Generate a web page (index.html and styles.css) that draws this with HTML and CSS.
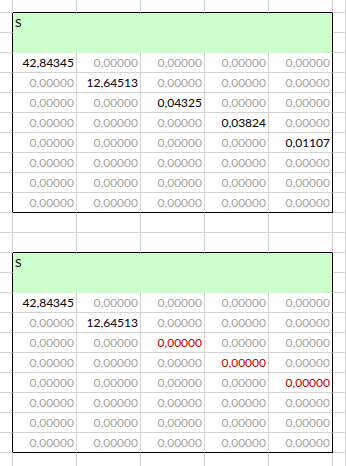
FILE: index.html
```html
<!DOCTYPE html>
<html>
<head>
<meta charset="utf-8">
<link rel="stylesheet" href="styles.css">
</head>
<body>
<div class="sheet">
  <!-- row 0 -->
  <div class="c top"></div><div class="c top tb"></div><div class="c top tb"></div><div class="c top tb"></div><div class="c top tb"></div><div class="c top tb"></div><div class="c top"></div>
  <!-- table 1 header -->
  <div class="c lb"></div><div class="hd">S</div><div class="c"></div>
  <div class="c lb"></div><div class="c"></div>
  <!-- table 1 data -->
  <div class="c lb"></div><div class="c k">42,84345</div><div class="c g">0,00000</div><div class="c g">0,00000</div><div class="c g">0,00000</div><div class="c g rb">0,00000</div><div class="c"></div>
  <div class="c lb"></div><div class="c g">0,00000</div><div class="c k">12,64513</div><div class="c g">0,00000</div><div class="c g">0,00000</div><div class="c g rb">0,00000</div><div class="c"></div>
  <div class="c lb"></div><div class="c g">0,00000</div><div class="c g">0,00000</div><div class="c k">0,04325</div><div class="c g">0,00000</div><div class="c g rb">0,00000</div><div class="c"></div>
  <div class="c lb"></div><div class="c g">0,00000</div><div class="c g">0,00000</div><div class="c g">0,00000</div><div class="c k">0,03824</div><div class="c g rb">0,00000</div><div class="c"></div>
  <div class="c lb"></div><div class="c g">0,00000</div><div class="c g">0,00000</div><div class="c g">0,00000</div><div class="c g">0,00000</div><div class="c k rb">0,01107</div><div class="c"></div>
  <div class="c lb"></div><div class="c g">0,00000</div><div class="c g">0,00000</div><div class="c g">0,00000</div><div class="c g">0,00000</div><div class="c g rb">0,00000</div><div class="c"></div>
  <div class="c lb"></div><div class="c g">0,00000</div><div class="c g">0,00000</div><div class="c g">0,00000</div><div class="c g">0,00000</div><div class="c g rb">0,00000</div><div class="c"></div>
  <div class="c lb"></div><div class="c g tb">0,00000</div><div class="c g tb">0,00000</div><div class="c g tb">0,00000</div><div class="c g tb">0,00000</div><div class="c g rb tb">0,00000</div><div class="c"></div>
  <!-- gap rows -->
  <div class="c"></div><div class="c"></div><div class="c"></div><div class="c"></div><div class="c"></div><div class="c"></div><div class="c"></div>
  <div class="c"></div><div class="c tb"></div><div class="c tb"></div><div class="c tb"></div><div class="c tb"></div><div class="c tb"></div><div class="c"></div>
  <!-- table 2 header -->
  <div class="c lb"></div><div class="hd">S</div><div class="c"></div>
  <div class="c lb"></div><div class="c"></div>
  <!-- table 2 data -->
  <div class="c lb"></div><div class="c k">42,84345</div><div class="c g">0,00000</div><div class="c g">0,00000</div><div class="c g">0,00000</div><div class="c g rb">0,00000</div><div class="c"></div>
  <div class="c lb"></div><div class="c g">0,00000</div><div class="c k">12,64513</div><div class="c g">0,00000</div><div class="c g">0,00000</div><div class="c g rb">0,00000</div><div class="c"></div>
  <div class="c lb"></div><div class="c g">0,00000</div><div class="c g">0,00000</div><div class="c r">0,00000</div><div class="c g">0,00000</div><div class="c g rb">0,00000</div><div class="c"></div>
  <div class="c lb"></div><div class="c g">0,00000</div><div class="c g">0,00000</div><div class="c g">0,00000</div><div class="c r">0,00000</div><div class="c g rb">0,00000</div><div class="c"></div>
  <div class="c lb"></div><div class="c g">0,00000</div><div class="c g">0,00000</div><div class="c g">0,00000</div><div class="c g">0,00000</div><div class="c r rb">0,00000</div><div class="c"></div>
  <div class="c lb"></div><div class="c g">0,00000</div><div class="c g">0,00000</div><div class="c g">0,00000</div><div class="c g">0,00000</div><div class="c g rb">0,00000</div><div class="c"></div>
  <div class="c lb"></div><div class="c g">0,00000</div><div class="c g">0,00000</div><div class="c g">0,00000</div><div class="c g">0,00000</div><div class="c g rb">0,00000</div><div class="c"></div>
  <div class="c lb"></div><div class="c g tb">0,00000</div><div class="c g tb">0,00000</div><div class="c g tb">0,00000</div><div class="c g tb">0,00000</div><div class="c g rb tb">0,00000</div><div class="c"></div>
  <!-- last row -->
  <div class="c"></div><div class="c"></div><div class="c"></div><div class="c"></div><div class="c"></div><div class="c"></div><div class="c"></div>
</div>
</body>
</html>
```
FILE: styles.css
```css
html, body {
  margin: 0;
  padding: 0;
  background: #ffffff;
  overflow: hidden;
}
.sheet {
  display: grid;
  grid-template-columns: 13px repeat(5, 64px) 1fr;
  grid-template-rows: 13px;
  grid-auto-rows: 20px;
  width: 346px;
  height: 466px;
  overflow: hidden;
  font-family: Lato, "Open Sans", sans-serif;
  font-size: 12px;
  line-height: 15px;
}
.c {
  box-sizing: border-box;
  border-right: 1px solid #d4d4d4;
  border-bottom: 1px solid #d4d4d4;
  display: flex;
  align-items: flex-end;
  justify-content: flex-end;
  padding: 0 2px 2px 0;
  white-space: nowrap;
  overflow: visible;
}
.g { color: #a6a6a6; }
.k { color: #000000; }
.r { color: #c00000; }
.lb { border-right-color: #000000; }
.rb { border-right-color: #000000; }
.tb { border-bottom-color: #000000; }
.hd {
  grid-column: span 5;
  grid-row: span 2;
  box-sizing: border-box;
  background: #ccffcc;
  border-right: 1px solid #000000;
  border-bottom: 1px solid #ccffcc;
  padding: 2px 0 0 2px;
  color: #000000;
}
```
